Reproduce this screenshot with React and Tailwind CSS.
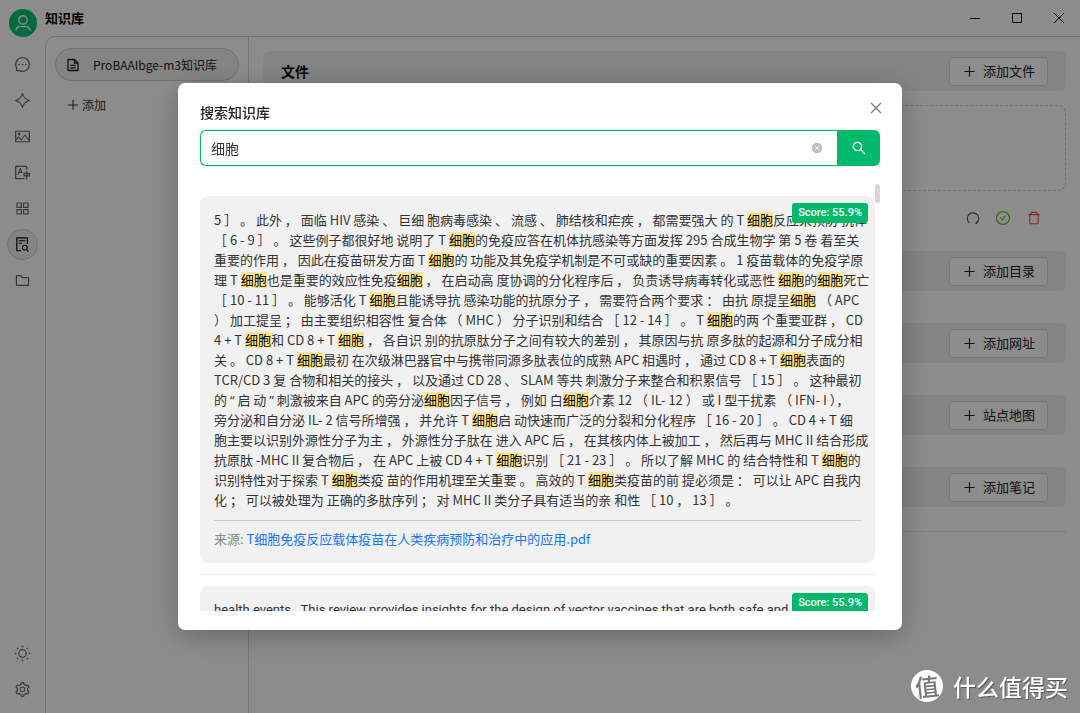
import {
  AiFillCloseCircle,
  AiOutlineAppstore,
  AiOutlineCheckCircle,
  AiOutlineClose,
  AiOutlineDelete,
  AiOutlineFileSearch,
  AiOutlineFolder,
  AiOutlineMessage,
  AiOutlinePicture,
  AiOutlinePlus,
  AiOutlineSearch,
  AiOutlineSetting,
  AiOutlineTranslation,
} from 'react-icons/ai';

const KEYWORD = '细胞';

const PASSAGE = [
  '5 ］ 。 此外 ， 面临 HIV 感染 、 巨细 胞病毒感染 、 流感 、 肺结核和疟疾 ， 都需要强大 的 T 细胞反应来预防 抗体',
  '［ 6 - 9 ］ 。 这些例子都很好地 说明了 T 细胞的免疫应答在机体抗感染等方面发挥 295 合成生物学 第 5 卷 着至关',
  '重要的作用 ， 因此在疫苗研发方面 T 细胞的 功能及其免疫学机制是不可或缺的重要因素 。 1 疫苗载体的免疫学原',
  '理 T 细胞也是重要的效应性免疫细胞 ， 在启动高 度协调的分化程序后 ， 负责诱导病毒转化或恶性 细胞的细胞死亡',
  '［ 10 - 11 ］ 。 能够活化 T 细胞且能诱导抗 感染功能的抗原分子 ， 需要符合两个要求 ： 由抗 原提呈细胞 （ APC',
  '） 加工提呈 ； 由主要组织相容性 复合体 （ MHC ） 分子识别和结合 ［ 12 - 14 ］ 。 T 细胞的两 个重要亚群 ， CD',
  '4 + T 细胞和 CD 8 + T 细胞 ， 各自识 别的抗原肽分子之间有较大的差别 ， 其原因与抗 原多肽的起源和分子成分相',
  '关 。 CD 8 + T 细胞最初 在次级淋巴器官中与携带同源多肽表位的成熟 APC 相遇时 ， 通过 CD 8 + T 细胞表面的',
  'TCR/CD 3 复 合物和相关的接头 ， 以及通过 CD 28 、 SLAM 等共 刺激分子来整合和积累信号 ［ 15 ］ 。 这种最初',
  '的 “ 启 动 ” 刺激被来自 APC 的旁分泌细胞因子信号 ， 例如 白细胞介素 12 （ IL- 12 ） 或 I 型干扰素 （ IFN- I ），',
  '旁分泌和自分泌 IL- 2 信号所增强 ， 并允许 T 细胞启 动快速而广泛的分裂和分化程序 ［ 16 - 20 ］ 。 CD 4 + T 细',
  '胞主要以识别外源性分子为主 ， 外源性分子肽在 进入 APC 后 ， 在其核内体上被加工 ， 然后再与 MHC II 结合形成',
  '抗原肽 -MHC II 复合物后 ， 在 APC 上被 CD 4 + T 细胞识别 ［ 21 - 23 ］ 。 所以了解 MHC 的 结合特性和 T 细胞的',
  '识别特性对于探索 T 细胞类疫 苗的作用机理至关重要 。 高效的 T 细胞类疫苗的前 提必须是 ： 可以让 APC 自我内',
  '化 ； 可以被处理为 正确的多肽序列 ； 对 MHC II 类分子具有适当的亲 和性 ［ 10 ， 13 ］ 。',
];

const SECTIONS = ['添加目录', '添加网址', '站点地图', '添加笔记'];

function SparkleIcon({ className }) {
  return (
    <svg viewBox="0 0 16 16" fill="none" stroke="currentColor" strokeWidth="1" strokeLinejoin="round" className={className}>
      <path d="M8 1.4C8.9 5 11 7.1 14.6 8C11 8.9 8.9 11 8 14.6C7.1 11 5 8.9 1.4 8C5 7.1 7.1 5 8 1.4Z" />
    </svg>
  );
}

function SunIcon({ className }) {
  return (
    <svg viewBox="0 0 18 18" fill="none" stroke="currentColor" strokeWidth="1.3" className={className}>
      <circle cx="9" cy="9" r="4" />
      <path
        strokeWidth="1.6"
        d="M9 .8v1.6M9 15.6v1.6M.8 9h1.6M15.6 9h1.6M3.2 3.2l1.1 1.1M13.7 13.7l1.1 1.1M3.2 14.8l1.1-1.1M13.7 4.3l1.1-1.1"
      />
    </svg>
  );
}

function UserIcon({ className }) {
  return (
    <svg viewBox="0 0 16 16" fill="none" stroke="currentColor" strokeWidth="1.4" className={className}>
      <circle cx="8" cy="5" r="4.2" />
      <path d="M1 15.8c0-3 2.2-4.2 4.2-4.2h5.6c2 0 4.2 1.2 4.2 4.2" />
    </svg>
  );
}

function NoteIcon({ className }) {
  return (
    <svg viewBox="0 0 12 14" fill="none" stroke="currentColor" strokeWidth="1.3" strokeLinejoin="round" className={className}>
      <path d="M1 1.5h6.5L11 5v7.5H1z" />
      <path d="M7.3 1.5V5H11M3.2 7.3h5.4M3.2 9.8h5.4" />
    </svg>
  );
}

function RefreshIcon({ className }) {
  return (
    <svg viewBox="0 0 14 14" fill="none" stroke="currentColor" strokeWidth="1.2" className={className}>
      <path d="M3.4 12A5.7 5.7 0 1 1 10.6 12" />
      <path d="M8.6 12.6l2.8.4-.2-2.8z" fill="currentColor" stroke="none" />
    </svg>
  );
}

const NAV = [
  { label: '聊天', Icon: AiOutlineMessage },
  { label: '智能体', Icon: SparkleIcon },
  { label: '绘图', Icon: AiOutlinePicture },
  { label: '翻译', Icon: AiOutlineTranslation },
  { label: '小程序', Icon: AiOutlineAppstore },
  { label: '知识库', Icon: AiOutlineFileSearch, active: true },
  { label: '文件', Icon: AiOutlineFolder },
];

function Rail() {
  return (
    <aside className="flex w-[45px] shrink-0 flex-col items-center pt-[9px] pb-2 text-[#666]">
      <div className="flex size-7 items-center justify-center rounded-full bg-[#00c274] text-white">
        <UserIcon className="size-4" />
      </div>
      <nav className="mt-3 flex flex-col gap-[5px]">
        {NAV.map(({ label, Icon, active }) => (
          <button
            key={label}
            aria-label={label}
            className={
              active
                ? 'flex size-[31px] items-center justify-center rounded-full border border-[#cfcfcf] bg-[#f1f1f1] text-black'
                : 'flex size-[31px] items-center justify-center'
            }
          >
            <Icon className="size-[17px]" />
          </button>
        ))}
      </nav>
      <div className="mt-auto flex flex-col gap-[5px]">
        <button aria-label="主题" className="flex size-[31px] items-center justify-center">
          <SunIcon className="size-[17px]" />
        </button>
        <button aria-label="设置" className="flex size-[31px] items-center justify-center">
          <AiOutlineSetting className="size-[17px]" />
        </button>
      </div>
    </aside>
  );
}

function TitleBar() {
  return (
    <header className="flex h-9 shrink-0 items-center justify-between">
      <h1 className="text-[13px] font-bold text-black">知识库</h1>
      <div className="flex items-center text-black">
        <button aria-label="最小化" className="flex w-[42px] justify-center">
          <svg viewBox="0 0 10 10" className="size-[10px]" stroke="currentColor"><path d="M0 5.5h10" /></svg>
        </button>
        <button aria-label="最大化" className="flex w-[42px] justify-center">
          <svg viewBox="0 0 10 10" className="size-[10px]" fill="none" stroke="currentColor"><path d="M.5.5h9v9h-9z" /></svg>
        </button>
        <button aria-label="关闭" className="flex w-[42px] justify-center">
          <svg viewBox="0 0 10 10" className="size-[10px]" stroke="currentColor"><path d="M0 0l10 10M10 0L0 10" /></svg>
        </button>
      </div>
    </header>
  );
}

function SectionBar({ title, action }) {
  return (
    <div className="flex h-10 shrink-0 items-center justify-between rounded-md bg-[#f1f1f1] px-[18px]">
      <h2 className="text-sm font-bold text-black">{title}</h2>
      <button className="flex h-[29px] items-center gap-[6px] rounded-[5px] border border-[#d9d9d9] bg-white px-3 text-[13px] text-[#222]">
        <AiOutlinePlus className="size-[15px]" />
        {action}
      </button>
    </div>
  );
}

function Library() {
  return (
    <div className="flex min-h-0 flex-1 rounded-tl-[10px] border-t border-l border-[#d4d4d4]">
      <div className="w-[203px] shrink-0 border-r border-[#d4d4d4] px-[9px] pt-[11px]">
        <button className="flex h-[33px] w-full items-center rounded-full border border-[#d0d0d0] bg-[#f1f1f1] px-[11px] text-xs text-[#222]">
          <NoteIcon className="h-[14px] w-3" />
          <span className="ml-[14px]">ProBAAIbge-m3知识库</span>
        </button>
        <button className="mt-3 flex h-6 items-center gap-[2px] px-[11px] text-xs text-[#333]">
          <AiOutlinePlus className="size-[14px]" />
          添加
        </button>
      </div>
      <main className="flex min-w-0 flex-1 flex-col px-[14px] pt-[14px]">
        <SectionBar title="文件" action="添加文件" />
        <div className="mt-[14px] h-[86px] shrink-0 rounded-lg border border-dashed border-[#cfcfcf]" />
        <div className="flex h-[60px] shrink-0 items-center justify-end gap-[15px] px-6 pb-[6px]">
          <button aria-label="刷新" className="text-[#555]"><RefreshIcon className="size-[14px]" /></button>
          <AiOutlineCheckCircle className="size-4 text-[#52c41a]" />
          <button aria-label="删除" className="text-[#ff4d4f]"><AiOutlineDelete className="size-4" /></button>
        </div>
        <div className="flex flex-col gap-8">
          {SECTIONS.map((name) => (
            <SectionBar key={name} title="" action={name} />
          ))}
        </div>
        <hr className="mt-6 border-[#e2e2e2]" />
      </main>
    </div>
  );
}

function Highlighted({ text }) {
  return text.split(/(细胞|[“”])/).map((part, i) => {
    if (part === KEYWORD) {
      return (
        <mark key={i} className="inline-block bg-[#ffe58f] leading-4 text-black">
          {part}
        </mark>
      );
    }
    if (part === '“' || part === '”') {
      return <span key={i} className="font-['Open_Sans',sans-serif]">{part}</span>;
    }
    return part;
  });
}

function ScoreBadge() {
  return (
    <span className="absolute top-[7px] right-[7px] rounded-[3px] bg-[#00b96b] px-[6px] font-['Roboto',sans-serif] text-[11px] leading-5 font-medium text-white">
      Score: 55.9%
    </span>
  );
}

function SearchDialog() {
  return (
    <section
      role="dialog"
      aria-label="搜索知识库"
      className="flex w-full max-w-[724px] flex-col rounded-[7px] bg-white px-[22px] pt-[18px] pb-[19px] shadow-[0_6px_28px_rgba(0,0,0,0.28)]"
    >
      <div className="flex h-[22px] items-center justify-between">
        <h2 className="text-sm font-medium text-[#222]">搜索知识库</h2>
        <button aria-label="关闭" className="-mt-2 -mr-1 text-[#777]"><AiOutlineClose className="size-4" /></button>
      </div>
      <form className="mt-[7px] flex h-[36px]">
        <div className="flex min-w-0 flex-1 items-center rounded-l-[6px] border border-r-0 border-[#00b96b] px-[10px] shadow-[0_0_0_1px_rgba(0,185,107,0.15)]">
          <input aria-label="搜索知识库" defaultValue="细胞" className="min-w-0 flex-1 text-sm text-[#333] outline-none" />
          <button type="button" aria-label="清除" className="mr-1 text-[#bfbfbf]"><AiFillCloseCircle className="size-3" /></button>
        </div>
        <button type="button" aria-label="搜索" className="flex w-[43px] items-center justify-center rounded-r-[6px] bg-[#00b96b] text-white">
          <AiOutlineSearch className="size-4" />
        </button>
      </form>
      <div className="mt-[18px] flex h-[427px]">
        <div className="min-w-0 flex-1 overflow-hidden pt-3">
          <article className="relative rounded-lg bg-[#f1f1f1] p-[14px] text-[13px] leading-5 text-[#333]">
            <p>
              {PASSAGE.map((line) => (
                <span key={line} className="block whitespace-pre">
                  <Highlighted text={line} />
                </span>
              ))}
            </p>
            <footer className="mt-[10px] border-t border-[#ccc] pt-2 text-[#888]">
              来源: <a href="#source" className="text-[#1677ff]">T细胞免疫反应载体疫苗在人类疾病预防和治疗中的应用.pdf</a>
            </footer>
            <ScoreBadge />
          </article>
          <hr className="my-[11px] border-[#f0f0f0]" />
          <article className="relative rounded-lg bg-[#f1f1f1] p-[14px] text-[13px] leading-5 text-[#333]">
            <p className="whitespace-nowrap font-['Roboto',sans-serif]">
              health events . This review provides insights for the design of vector vaccines that are both safe and effic
            </p>
            <ScoreBadge />
          </article>
        </div>
        <div className="h-[19px] w-[5px] rounded-full bg-[#d6d6d6]" />
      </div>
    </section>
  );
}

function Watermark() {
  return (
    <div className="fixed right-3 bottom-[11px] flex items-center gap-[10px] text-white">
      <span className="flex size-8 items-center justify-center rounded-full bg-white text-[24px] leading-none font-medium text-[#777]">
        <span className="-rotate-6">值</span>
      </span>
      <span className="text-[23px] leading-8 font-medium [text-shadow:1px_1px_1px_rgba(0,0,0,0.4)]">什么值得买</span>
    </div>
  );
}

export default function App() {
  return (
    <div className="flex h-screen overflow-hidden bg-white font-['Noto_Sans_CJK_SC',sans-serif]">
      <Rail />
      <div className="flex min-w-0 flex-1 flex-col">
        <TitleBar />
        <Library />
      </div>
      <div className="fixed inset-0 flex items-start justify-center bg-black/45 pt-[83px]">
        <SearchDialog />
      </div>
      <Watermark />
    </div>
  );
}
